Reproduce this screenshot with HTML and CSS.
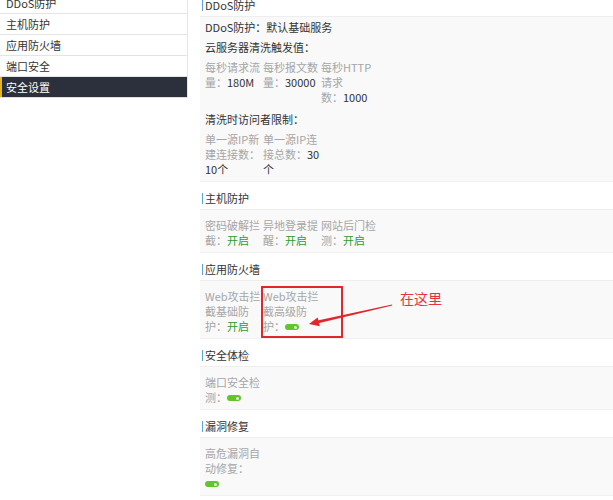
FILE: index.html
```html
<!DOCTYPE html>
<html lang="zh-CN">
<head>
<meta charset="utf-8">
<title>安全设置</title>
<link rel="stylesheet" href="styles.css">
</head>
<body>
<div class="page">
  <aside class="side">
    <div class="nav-item">DDoS防护</div>
    <div class="nav-item">主机防护</div>
    <div class="nav-item">应用防火墙</div>
    <div class="nav-item">端口安全</div>
    <div class="nav-item active">安全设置</div>
  </aside>
  <main class="main">
    <section class="sec">
      <div class="sec-head">DDoS防护</div>
      <div class="box">
        <div class="box-title">DDoS防护<span class="c">：</span>默认基础服务</div>
        <div class="box-title">云服务器清洗触发值<span class="c">：</span></div>
        <div class="items">
          <div class="item">每秒请求流<br>量<span class="c">：</span><span class="val">180M</span></div>
          <div class="item">每秒报文数<br>量<span class="c">：</span><span class="val">30000</span></div>
          <div class="item">每秒HTTP<br>请求<br>数<span class="c">：</span><span class="val">1000</span></div>
        </div>
        <div class="box-title">清洗时访问者限制<span class="c">：</span></div>
        <div class="items">
          <div class="item">单一源IP新<br>建连接数<span class="c">：</span><br><span class="val">10个</span></div>
          <div class="item">单一源IP连<br>接总数<span class="c">：</span><span class="val">30</span><br><span class="val">个</span></div>
        </div>
      </div>
    </section>
    <section class="sec">
      <div class="sec-head">主机防护</div>
      <div class="box">
        <div class="items">
          <div class="item">密码破解拦<br>截<span class="c">：</span><span class="on">开启</span></div>
          <div class="item">异地登录提<br>醒<span class="c">：</span><span class="on">开启</span></div>
          <div class="item">网站后门检<br>测<span class="c">：</span><span class="on">开启</span></div>
        </div>
      </div>
    </section>
    <section class="sec">
      <div class="sec-head">应用防火墙</div>
      <div class="box">
        <div class="items">
          <div class="item">Web攻击拦<br>截基础防<br>护<span class="c">：</span><span class="on">开启</span></div>
          <div class="item">Web攻击拦<br>截高级防<br>护<span class="c">：</span><span class="toggle"></span></div>
        </div>
      </div>
    </section>
    <section class="sec">
      <div class="sec-head">安全体检</div>
      <div class="box">
        <div class="items">
          <div class="item">端口安全检<br>测<span class="c">：</span><span class="toggle"></span></div>
        </div>
      </div>
    </section>
    <section class="sec">
      <div class="sec-head">漏洞修复</div>
      <div class="box">
        <div class="items">
          <div class="item">高危漏洞自<br>动修复<span class="c">：</span><br><span class="toggle"></span></div>
        </div>
      </div>
    </section>
  </main>

  <div class="mark"></div>
  <svg class="arrow" width="100" height="40" viewBox="0 0 100 40">
    <polygon points="92,9.6 92.2,10.6 18.4,28.2 17.6,25.4" fill="#e3262b"/>
    <polygon points="9,29 19.8,31.2 17.6,22.6" fill="#e3262b"/>
  </svg>
  <div class="here">在这里</div>
</div>
</body>
</html>
```

FILE: styles.css
```css
* {
  box-sizing: border-box;
}

html,
body {
  margin: 0;
  padding: 0;
  background: #ffffff;
}

body {
  font-family: "Noto Sans CJK SC", "Noto Sans", sans-serif;
  font-size: 11px;
  color: #333333;
  overflow: hidden;
}

.page {
  position: relative;
  display: flex;
  align-items: flex-start;
  height: 500px;
  overflow: hidden;
}

/* sidebar */
.side {
  width: 188px;
  flex: none;
  margin-top: -7px;
  border-right: 1px solid #e6e6e6;
}

.nav-item {
  height: 21px;
  line-height: 20px;
  padding-left: 6px;
  border-bottom: 1px solid #e4e4e4;
  color: #333333;
}

.nav-item.active {
  background: #2b303c;
  color: #ffffff;
  box-shadow: inset 2px 0 0 #e6b422;
  border-bottom-color: #dddddd;
}

/* main */
.main {
  flex: 1;
  min-width: 0;
  margin-left: 12px;
  margin-top: -11px;
}

.sec-head {
  display: flex;
  align-items: center;
  height: 16px;
  line-height: 16px;
  margin-top: 8px;
  margin-bottom: 3px;
  padding-left: 2px;
  color: #333333;
}

.sec-head::before {
  content: "";
  width: 1px;
  height: 11px;
  background: #5aa5e0;
  margin-right: 2px;
}

.box {
  background: #f9f9f9;
  border-top: 1px solid #eeeeee;
  border-bottom: 1px solid #f1f1f1;
  padding: 0 5px;
}

.box-title {
  line-height: 20px;
  color: #333333;
}

.items {
  display: flex;
  gap: 3px;
  padding: 3px 0 4px;
}

.items:first-child {
  padding-top: 8px;
}

.item {
  width: 55px;
  flex: none;
  line-height: 15px;
  color: #a6a6a6;
  white-space: nowrap;
}

/* centred full-width colon, as in the reference */
.c {
  font-family: "Noto Sans CJK TC", "Noto Sans CJK SC", sans-serif;
}

.val {
  color: #333333;
}

.on {
  color: #2e9d2e;
}

.toggle {
  position: relative;
  display: inline-block;
  width: 14px;
  height: 6px;
  border-radius: 3px;
  background: #62c52e;
  vertical-align: middle;
  margin-top: -2px;
}

.toggle::after {
  content: "";
  position: absolute;
  right: 2px;
  top: 1.5px;
  width: 3px;
  height: 3px;
  border-radius: 50%;
  background: #d9f5c8;
}

/* annotation overlay */
.mark {
  position: absolute;
  left: 261px;
  top: 286px;
  width: 82px;
  height: 52px;
  border: 2px solid #e3262b;
}

.arrow {
  position: absolute;
  left: 300px;
  top: 295px;
}

.here {
  position: absolute;
  left: 400px;
  top: 291px;
  font-size: 14px;
  line-height: 14px;
  color: #e8323a;
}
```
